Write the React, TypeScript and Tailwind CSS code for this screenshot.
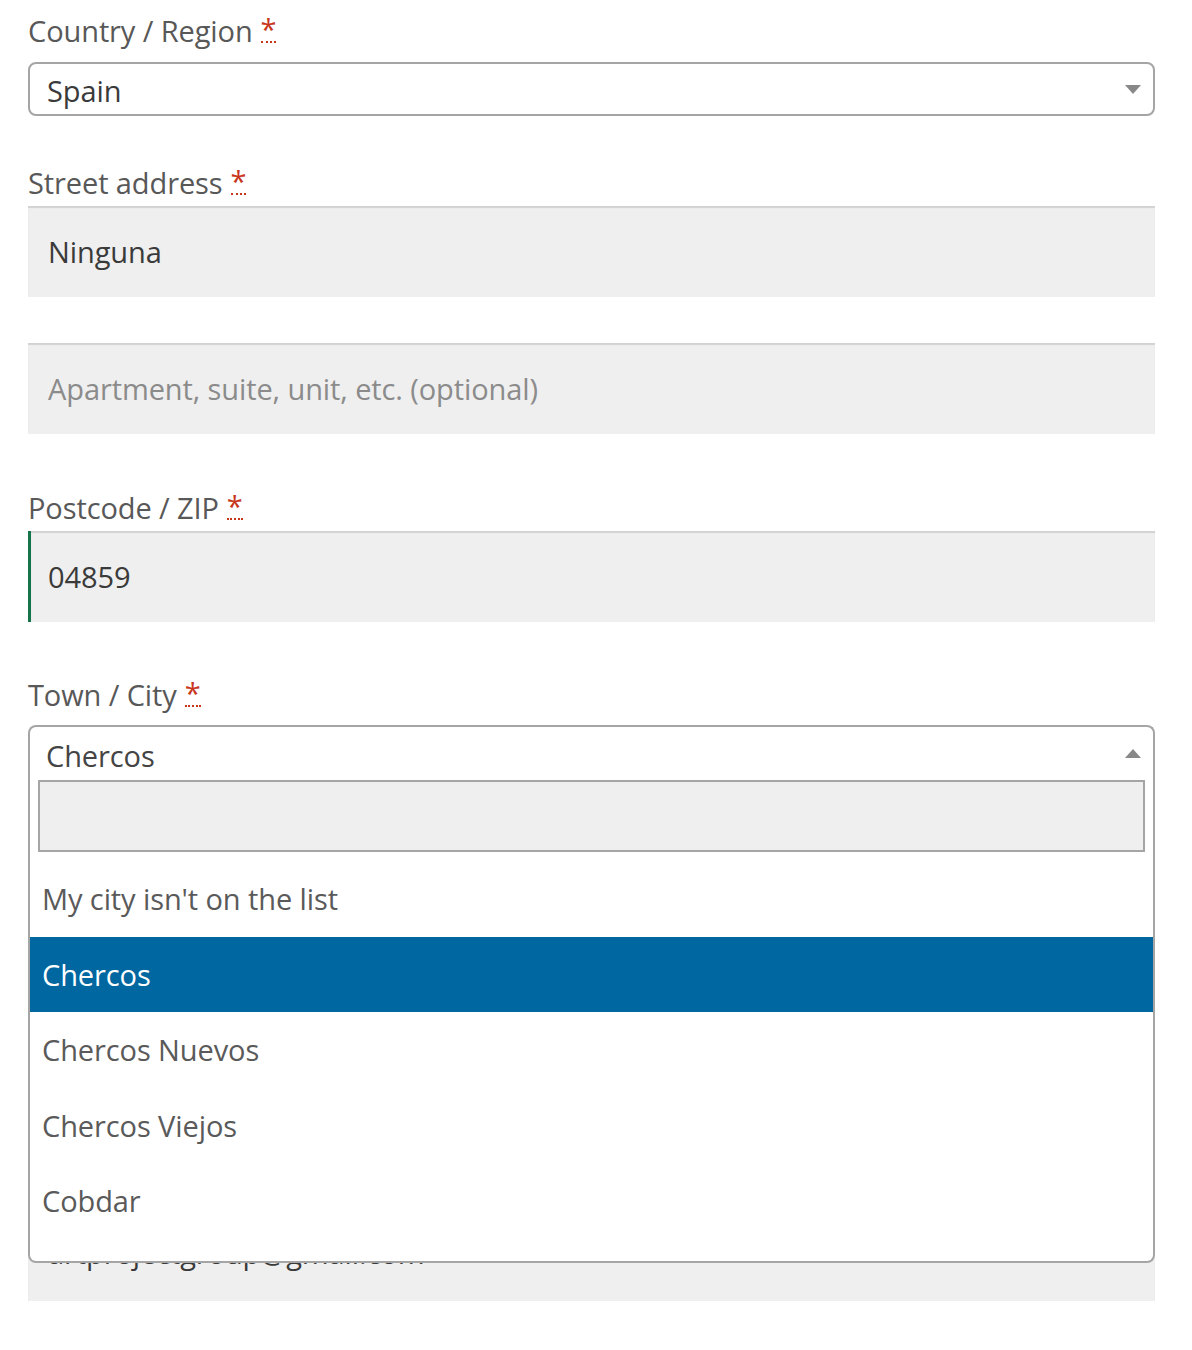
import React from "react";

const font = { fontFamily: '"Open Sans", "Noto Sans", sans-serif' };

function Req() {
  return (
    <abbr className="ml-[8px] text-[#c8361c] no-underline border-b-2 border-dotted border-[#c8361c] leading-none inline-block h-[24px] align-[-2px]" title="required">
      <span className="relative top-[-5px]">*</span>
    </abbr>
  );
}

function Label({ children }: { children: React.ReactNode }) {
  return (
    <div className="h-[45px] leading-[45px] text-[29px] tracking-[-0.1px] text-[#585858] flex items-center">
      <span>{children}</span>
      <Req />
    </div>
  );
}

function TextInput({ value, placeholder, green }: { value?: string; placeholder?: string; green?: boolean }) {
  return (
    <div
      className={`h-[91px] bg-[#efefef] shadow-[inset_0_2px_1px_rgba(0,0,0,0.12)] flex items-center text-[29px] tracking-[-0.1px] ${
        green ? "border-l-[3px] border-[#16744a] pl-[17px]" : "pl-[20px]"
      }`}
    >
      {value ? <span className="text-[#3a3a3a]">{value}</span> : <span className="text-[#8b8b8b]">{placeholder}</span>}
    </div>
  );
}

function ArrowDown() {
  return (
    <svg width="16" height="9" viewBox="0 0 16 9">
      <path d="M0 0 L16 0 L8 9 Z" fill="#888" />
    </svg>
  );
}
function ArrowUp() {
  return (
    <svg width="16" height="9" viewBox="0 0 16 9">
      <path d="M0 9 L16 9 L8 0 Z" fill="#888" />
    </svg>
  );
}

export default function App() {
  const options = ["My city isn't on the list", "Chercos", "Chercos Nuevos", "Chercos Viejos", "Cobdar"];
  return (
    <div className="w-[1192px] h-[1350px] bg-white overflow-hidden" style={font}>
      <div className="ml-[28px] w-[1127px] pt-[8px]">
        {/* Country */}
        <Label>Country / Region</Label>
        <div className="mt-[9px] h-[54px] border-2 border-[#a5a5a5] rounded-[8px] flex items-center justify-between pl-[17px] pr-[12px] text-[29px] tracking-[-0.1px] text-[#3a3a3a]">
          <span className="relative top-[2px]">Spain</span>
          <ArrowDown />
        </div>

        {/* Street */}
        <div className="mt-[44px]">
          <Label>Street address</Label>
        </div>
        <div className="mt-[1px]">
          <TextInput value="Ninguna" />
        </div>
        <div className="mt-[46px]">
          <TextInput placeholder="Apartment, suite, unit, etc. (optional)" />
        </div>

        {/* Postcode */}
        <div className="mt-[51px]">
          <Label>Postcode / ZIP</Label>
        </div>
        <div className="mt-[1px]">
          <TextInput value="04859" green />
        </div>

        {/* Town */}
        <div className="mt-[50px]">
          <Label>Town / City</Label>
        </div>
        <div className="relative mt-[8px] z-10">
          <div className="h-[55px] border-2 border-b-0 border-[#a5a5a5] rounded-t-[8px] bg-white flex items-center justify-between pl-[16px] pr-[12px] text-[29px] tracking-[-0.1px] text-[#444]">
            <span className="relative top-[2px]">Chercos</span>
            <ArrowUp />
          </div>

          {/* open dropdown */}
          <div className="absolute left-0 right-0 top-full bg-white border-2 border-t-0 border-[#a5a5a5] rounded-b-[8px] text-[29px] tracking-[-0.1px]">
            <div className="px-[8px] pb-[9px]">
              <div className="h-[72px] bg-[#efefef] border-2 border-[#a5a5a5]" />
            </div>
            <ul className="pb-[22px]">
              {options.map((o) => (
                <li
                  key={o}
                  className={`h-[75.5px] flex items-center pl-[12px] ${
                    o === "Chercos" ? "bg-[#0067a0] text-white" : "text-[#5a5a5a]"
                  }`}
                >
                  {o}
                </li>
              ))}
            </ul>
          </div>
        </div>

        {/* Fields hidden behind the dropdown */}
        <div className="h-[431px]" />
        <div className="h-[90px] bg-[#efefef] shadow-[inset_0_2px_1px_rgba(0,0,0,0.12)] flex items-center pl-[20px] text-[29px] tracking-[-0.1px]">
          <span className="text-[#3a3a3a] relative top-[-3px]">artprojectgroup@gmail.com</span>
        </div>
      </div>
    </div>
  );
}
